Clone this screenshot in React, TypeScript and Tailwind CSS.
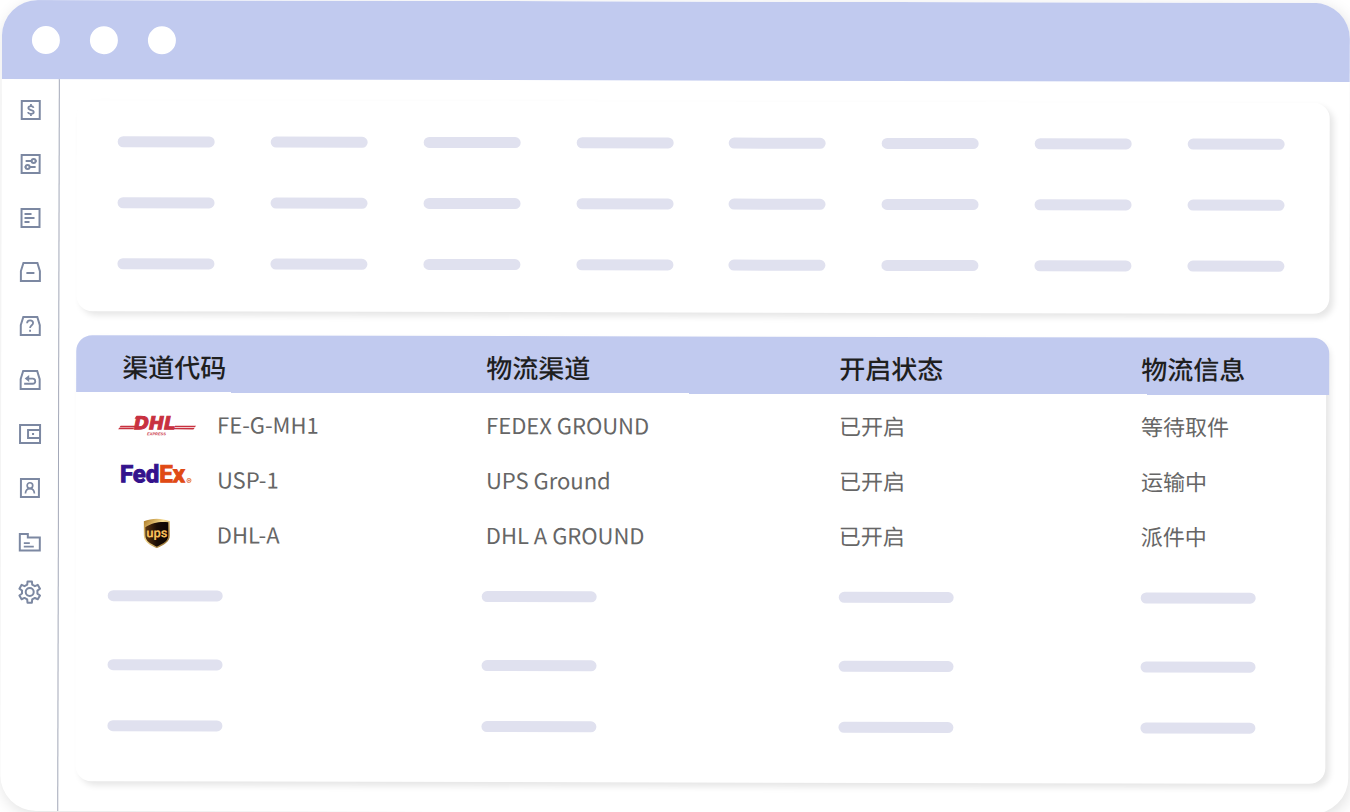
import type { ReactNode } from 'react';
import { clsx } from 'clsx';

interface SideIcon {
  label: string;
  shape: ReactNode;
}

const tray = <path d="M5 3h14l2.5 8v10h-19V11z" />;
const box = <rect x="3" y="3" width="18" height="18" />;

const sideIcons: SideIcon[] = [
  {
    label: '费用',
    shape: (
      <>
        {box}
        <path
          strokeWidth="1.8"
          d="M14.8 9.8c-.3-1.1-1.2-1.7-2.6-1.7-1.5 0-2.6.8-2.6 1.9 0 2.8 5.4 1.2 5.4 4 0 1.2-1.2 1.9-2.8 1.9-1.6 0-2.7-.6-3-1.8M12.2 6v2M12.2 16v2"
        />
      </>
    ),
  },
  {
    label: '设置项',
    shape: (
      <>
        {box}
        <path d="M7 9h6M17 9h1M11 15h6M6 15h1" />
        <circle cx="15" cy="9" r="2" />
        <circle cx="9" cy="15" r="2" />
      </>
    ),
  },
  {
    label: '单据',
    shape: (
      <>
        {box}
        <path d="M6 8h7M6 12h10M6 16h5" />
      </>
    ),
  },
  {
    label: '出库',
    shape: (
      <>
        {tray}
        <path d="M8 13h8" />
      </>
    ),
  },
  {
    label: '问题件',
    shape: (
      <>
        {tray}
        <path
          strokeWidth="1.8"
          d="M8.8 9.2c0-1.8 1.2-2.9 3-2.9s3 1.1 3 2.7c0 2.2-3 2.3-3 5M11.8 15.6v2"
        />
      </>
    ),
  },
  {
    label: '退件',
    shape: (
      <>
        {tray}
        <path strokeWidth="1.8" d="M9 10.5h5.5a2.6 2.6 0 0 1 0 5.2H6" />
        <path d="M11 7v7l-4.5-3.5z" fill="currentColor" stroke="none" />
      </>
    ),
  },
  {
    label: '钱包',
    shape: (
      <>
        <path d="M2 3h20v18H2zM22 8H10v8h12" />
        <rect x="14" y="11" width="2" height="2" fill="currentColor" stroke="none" />
      </>
    ),
  },
  {
    label: '客户',
    shape: (
      <>
        {box}
        <circle cx="12" cy="9.5" r="2.8" strokeWidth="1.7" />
        <path strokeWidth="1.7" d="M7.5 17.5c.2-3.2 2-5 4.5-5s4.3 1.8 4.5 5" />
      </>
    ),
  },
  {
    label: '文件',
    shape: (
      <>
        <path d="M2 20.5V4h8v3.5h12v13z" />
        <path d="M6 13h6M6 16.5h10" strokeWidth="1.8" />
      </>
    ),
  },
  {
    label: '设置',
    shape: (
      <>
        <path
          strokeLinejoin="round"
          d="M9.8 1.4h4.4l.3 3.2 2.7 1.5 2.9-1.3 2.2 3.8-2.6 1.9v3l2.6 1.9-2.2 3.8-2.9-1.3-2.7 1.5-.3 3.2H9.8l-.3-3.2-2.7-1.5-2.9 1.3-2.2-3.8 2.6-1.9v-3L1.7 8.6l2.2-3.8 2.9 1.3 2.7-1.5z"
        />
        <circle cx="12" cy="12" r="4" />
      </>
    ),
  },
];

const DhlLogo = () => (
  <svg width="80" height="28" viewBox="0 0 80 28" className="ml-[42px]" role="img" aria-label="DHL">
    <g fill="#c8313f">
      <path d="M2.6 16.4h15l-1 1.5H1.4zM1.2 18.5h15l-1 1.5H0z" />
      <path d="M57 16.4h21l-1.200 1.5H56zM56 18.500h20.500l-1.200 1.500H55z" />
      <path d="M18 7h8l-1.500 2.500h-8z" />
      <text
        x="16"
        y="20"
        fontSize="18"
        fontWeight="700"
        fontStyle="italic"
        stroke="#c8313f"
        fontFamily="DejaVu Sans, sans-serif"
      >
        DHL
      </text>
      <text
        x="29"
        y="26"
        fontSize="4"
        fontWeight="700"
        fontStyle="italic"
        fontFamily="Liberation Sans, sans-serif"
      >
        EXPRESS
      </text>
    </g>
  </svg>
);

const FedexLogo = () => (
  <svg width="80" height="28" viewBox="0 0 80 28" className="mb-2 ml-[42px]" role="img" aria-label="FedEx">
    <text
      x="2"
      y="22"
      fontSize="24"
      fontWeight="700"
      stroke="#34128c"
      fill="#34128c"
      fontFamily="Roboto, sans-serif"
    >
      Fed
      <tspan fill="#e04a14" stroke="#e04a14">
        Ex
      </tspan>
    </text>
    <circle cx="71" cy="20" r="2" fill="none" stroke="#e8825c" />
    <circle cx="71" cy="20" r="1" fill="#e8825c" />
  </svg>
);

const UpsLogo = () => (
  <svg width="28" height="30" viewBox="0 0 28 30" className="ml-[67px]" role="img" aria-label="UPS">
    <defs>
      <linearGradient id="upsGold" x1="0" y1="0" x2="1" y2="1">
        <stop offset="0" stopColor="#a8741f" />
        <stop offset="0.4" stopColor="#f6dc92" />
        <stop offset="1" stopColor="#7d5418" />
      </linearGradient>
      <linearGradient id="upsBrown" x1="0" y1="0" x2="1" y2="0">
        <stop offset="0" stopColor="#5d3611" />
        <stop offset="0.5" stopColor="#1a0d06" />
        <stop offset="1" stopColor="#0c0604" />
      </linearGradient>
    </defs>
    <path d="M1 3C9-.5 19-.5 27 3v14c0 7-6 9.5-13 13C7 26.5 1 24 1 17z" fill="url(#upsGold)" />
    <path
      d="M2.5 9C9 4 17 3 25.5 3.8V17c0 6-5 8.2-11.5 11.3C7.5 25.2 2.5 23 2.5 17z"
      fill="url(#upsBrown)"
    />
    <text
      x="14"
      y="19"
      textAnchor="middle"
      fontSize="13"
      fontWeight="700"
      fill="#f8bd58"
      fontFamily="Roboto, sans-serif"
    >
      ups
    </text>
  </svg>
);

const columns = [
  { title: '渠道代码', width: 'w-[406px]', head: 'pl-[46px]', bar: 'pl-8' },
  { title: '物流渠道', width: 'w-[355px]', head: 'pl-1', bar: 'pl-0' },
  { title: '开启状态', width: 'w-[302px]', head: 'pl-0.5', bar: 'pl-0.5' },
  { title: '物流信息', width: '', head: 'pl-0.5', bar: 'pl-0.5' },
];

const channels = [
  { logo: <DhlLogo />, code: 'FE-G-MH1', name: 'FEDEX GROUND', status: '已开启', info: '等待取件' },
  { logo: <FedexLogo />, code: 'USP-1', name: 'UPS Ground', status: '已开启', info: '运输中' },
  { logo: <UpsLogo />, code: 'DHL-A', name: 'DHL A GROUND', status: '已开启', info: '派件中' },
];

const skeletonRows = ['h-[66px]', 'h-[72px]', 'h-[51px]'];

const Bar = ({ className }: { className: string }) => (
  <div className={clsx('h-[11px] rounded-full bg-[#e0e1ef]', className)} />
);

const TitleBar = () => (
  <header className="flex h-[79px] items-center gap-[30px] bg-[#c1caef] pl-[30px]">
    {[0, 1, 2].map((dot) => (
      <span key={dot} className="size-7 rounded-full bg-white" />
    ))}
  </header>
);

const Sidebar = () => (
  <nav className="flex w-[58px] shrink-0 flex-col items-center gap-[30px] border-r border-[#a3a8b8] pt-[19px]">
    {sideIcons.map(({ label, shape }) => (
      <button key={label} type="button" aria-label={label} className="text-[#7c88a2] last:-mt-1">
        <svg
          width="24"
          height="24"
          viewBox="0 0 24 24"
          fill="none"
          stroke="currentColor"
          strokeWidth="2"
        >
          {shape}
        </svg>
      </button>
    ))}
  </nav>
);

const SummaryCard = () => (
  <section className="flex flex-col gap-[50px] rounded-2xl bg-white pt-9 pr-[45px] pb-[42px] pl-[41px] shadow-[4px_4px_6px_rgba(0,0,0,0.1)]">
    {[0, 1, 2].map((row) => (
      <div key={row} className="flex justify-between">
        {columns.concat(columns).map((_, i) => (
          <Bar key={i} className="w-[97px]" />
        ))}
      </div>
    ))}
  </section>
);

// The header band is painted on the wrapper so no seams show between the cells
const ChannelTable = () => (
  <section className="mt-6 mr-[3px] rounded-2xl bg-white pb-[30px] shadow-[4px_4px_6px_rgba(0,0,0,0.1)]">
    <div className="-mr-[3px] overflow-hidden rounded-t-2xl bg-[linear-gradient(#c1caef_57px,transparent_57px)]">
      <table className="w-full table-fixed text-left">
        <thead>
          <tr className="h-[57px] text-[26px] text-[#1f1f1f]">
            {columns.map(({ title, width, head }) => (
              <th key={title} className={clsx('pt-1 font-medium', width, head)}>
                {title}
              </th>
            ))}
          </tr>
        </thead>
        <tbody className="text-[22px] leading-8 text-[#666666]">
          {channels.map(({ logo, code, name, status, info }) => (
            <tr key={code} className="h-[55px] *:pb-1 first:h-[60px] first:*:pt-[5px]">
              <td>
                <div className="flex items-center">
                  <div className="flex h-8 w-[141px] shrink-0 items-center">{logo}</div>
                  {code}
                </div>
              </td>
              <td className="pl-1">{name}</td>
              <td className="pl-0.5">{status}</td>
              <td className="pl-0.5">{info}</td>
            </tr>
          ))}
          {skeletonRows.map((height, row) => (
            <tr key={row} className={height}>
              {columns.map(({ title, bar }) => (
                <td key={title} className={bar}>
                  <Bar className="w-[115px]" />
                </td>
              ))}
            </tr>
          ))}
        </tbody>
      </table>
    </div>
  </section>
);

const App = () => (
  <div className="min-h-screen overflow-hidden bg-white pl-0.5 font-['Noto_Sans_CJK_SC',sans-serif]">
    <div className="origin-top-left rotate-[0.125deg] overflow-hidden rounded-[36px] bg-white shadow-[2px_4px_16px_rgba(0,0,0,0.12)]">
      <TitleBar />
      <div className="flex">
        <Sidebar />
        <main className="min-w-0 flex-1 pt-[21px] pr-5 pb-[30px] pl-[17px]">
          <SummaryCard />
          <ChannelTable />
        </main>
      </div>
    </div>
  </div>
);

export default App;
